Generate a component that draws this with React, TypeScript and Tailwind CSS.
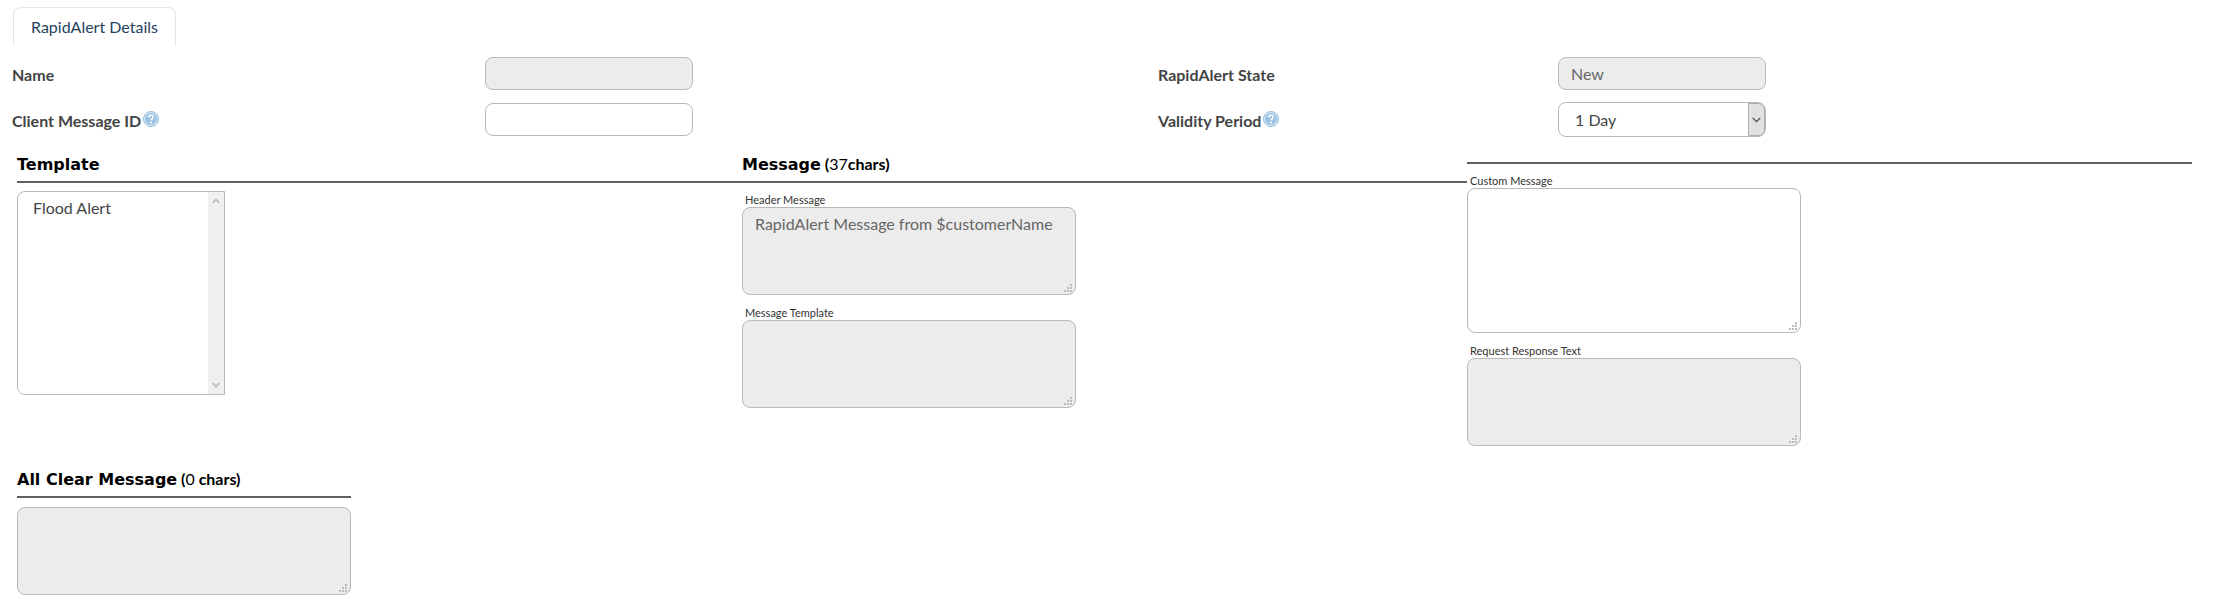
import clsx from "clsx";
import { useState, type ReactNode } from "react";

const fieldBase =
  "block rounded-lg border border-[#b8b8b8] text-base outline-none";
const readOnlyField = "bg-[#ececec] text-[#666]";
const editableField = "bg-white text-[#444]";

const templates = ["Flood Alert"];
const validityPeriods = ["1 Day", "2 Days", "3 Days", "7 Days"];

function HelpIcon() {
  return (
    <svg viewBox="0 0 16 16" className="mb-1 ml-0.5 h-4 w-4 shrink-0" aria-hidden>
      <circle cx="8" cy="8" r="7.5" fill="#dcebf5" stroke="#94bbd9" />
      <circle cx="8" cy="8" r="6" fill="#9dc3e2" />
      <path
        d="M5.9 6.4c0-1.3.9-2.1 2.1-2.1s2.1.7 2.1 1.8c0 1.5-1.9 1.5-1.9 3.1"
        fill="none"
        stroke="#fff"
        strokeWidth="1.5"
      />
      <circle cx="8.1" cy="11.4" r="1" fill="#fff" />
    </svg>
  );
}

function FieldLabel({
  htmlFor,
  help,
  children,
}: {
  htmlFor: string;
  help?: boolean;
  children: ReactNode;
}) {
  return (
    <div className="flex items-center pt-0.5">
      <label htmlFor={htmlFor} className="font-bold text-[#444]">
        {children}
      </label>
      {help ? <HelpIcon /> : null}
    </div>
  );
}

function SectionHeading({ id, children }: { id?: string; children?: ReactNode }) {
  return (
    <h2
      id={id}
      className="border-b-2 border-[#5f5f5f] pb-2 text-base leading-[19px] font-bold text-black"
    >
      {children}
    </h2>
  );
}

// leading-none keeps the second font from stretching the heading's line box
function HeadingName({ children }: { children: ReactNode }) {
  return <span className="font-['DejaVu_Sans'] leading-none">{children}</span>;
}

function ResizeGrip() {
  return (
    <svg
      viewBox="0 0 8 8"
      className="pointer-events-none absolute right-1 bottom-[3px] h-2 w-2"
      fill="#bcbcbc"
      shapeRendering="crispEdges"
      aria-hidden
    >
      <path d="M6 0h2v2H6zM3 3h2v2H3zM6 3h2v2H6zM0 6h2v2H0zM3 6h2v2H3zM6 6h2v2H6z" />
    </svg>
  );
}

function MessageBox({
  id,
  label,
  labelledBy,
  value,
  onChange,
  tall,
}: {
  id: string;
  label?: string;
  labelledBy?: string;
  value: string;
  onChange?: (value: string) => void;
  tall?: boolean;
}) {
  return (
    <div className="w-[334px]">
      {label ? (
        <label
          htmlFor={id}
          className="block pl-[3px] text-[11px] leading-[14px] text-[#333]"
        >
          {label}
        </label>
      ) : null}
      <div className="relative">
        <textarea
          id={id}
          aria-labelledby={labelledBy}
          value={value}
          disabled={!onChange}
          onChange={(e) => onChange?.(e.target.value)}
          className={clsx(
            fieldBase,
            "w-full resize-none px-3 py-1",
            tall ? "h-[145px]" : "h-[88px]",
            onChange ? editableField : readOnlyField,
          )}
        />
        <ResizeGrip />
      </div>
    </div>
  );
}

export default function App() {
  const [clientMessageId, setClientMessageId] = useState("");
  const [validity, setValidity] = useState(validityPeriods[0]);
  const [customMessage, setCustomMessage] = useState("");

  const headerMessage = "RapidAlert Message from $customerName";
  const allClearMessage = "";

  return (
    <main className="bg-white pb-[10px] font-['Lato',sans-serif] text-base text-[#444]">
      <div className="flex px-[13px] pt-[7px]" role="tablist">
        <button
          type="button"
          role="tab"
          aria-selected
          className="h-[39px] rounded-t-lg border border-b-0 border-[#e6e6e6] px-[17px] text-[#27425f]"
        >
          RapidAlert Details
        </button>
      </div>

      <div className="grid grid-cols-[473fr_673fr_400fr_664fr] items-center gap-y-3 px-3 pt-[11px]">
        <FieldLabel htmlFor="name">Name</FieldLabel>
        <input
          id="name"
          disabled
          className={clsx(fieldBase, readOnlyField, "h-[33px] w-52 px-3")}
        />
        <FieldLabel htmlFor="state">RapidAlert State</FieldLabel>
        <input
          id="state"
          value="New"
          disabled
          className={clsx(fieldBase, readOnlyField, "h-[33px] w-52 px-3")}
        />

        <FieldLabel htmlFor="client-message-id" help>
          Client Message ID
        </FieldLabel>
        <input
          id="client-message-id"
          value={clientMessageId}
          onChange={(e) => setClientMessageId(e.target.value)}
          className={clsx(fieldBase, editableField, "h-[33px] w-52 px-3")}
        />
        <FieldLabel htmlFor="validity" help>
          Validity Period
        </FieldLabel>
        <div className="relative w-52">
          <select
            id="validity"
            value={validity}
            onChange={(e) => setValidity(e.target.value)}
            className={clsx(
              fieldBase,
              editableField,
              "h-[35px] w-full appearance-none px-4",
            )}
          >
            {validityPeriods.map((period) => (
              <option key={period}>{period}</option>
            ))}
          </select>
          <span className="pointer-events-none absolute inset-y-px right-px flex w-[17px] items-center justify-center rounded-r-[7px] border border-[#adadad] bg-[#e1e1e1]">
            <svg viewBox="0 0 9 6" className="h-[6px] w-[9px]" aria-hidden>
              <path d="M.7.8 4.5 4.6 8.3.8" fill="none" stroke="#444" strokeWidth="1.2" />
            </svg>
          </span>
        </div>
      </div>

      <div className="grid grid-cols-3 pt-[17px] pr-[42px] pl-[17px]">
        <section>
          <SectionHeading id="template-heading">
            <HeadingName>Template</HeadingName>
          </SectionHeading>
          <div className="pt-2">
            <div className="relative w-52">
              <select
                size={8}
                aria-labelledby="template-heading"
                className="block h-[204px] w-full appearance-none overflow-hidden rounded-l-lg border border-[#b8b8b8] bg-white py-[6px] pr-5 pl-[15px] text-base text-[#444] outline-none"
              >
                {templates.map((template) => (
                  <option key={template} className="p-0">
                    {template}
                  </option>
                ))}
              </select>
              <span className="pointer-events-none absolute inset-y-px right-px flex w-4 flex-col items-center justify-between bg-[#f0f0f0] py-[6px]">
                <svg viewBox="0 0 8 6" className="h-[6px] w-2" aria-hidden>
                  <path d="M.7 4.9 4 1.6l3.3 3.3" fill="none" stroke="#bfbfbf" strokeWidth="2" />
                </svg>
                <svg viewBox="0 0 8 6" className="h-[6px] w-2" aria-hidden>
                  <path d="M.7 1.1 4 4.4l3.3-3.3" fill="none" stroke="#bfbfbf" strokeWidth="2" />
                </svg>
              </span>
            </div>
          </div>
        </section>

        <section>
          <SectionHeading>
            <HeadingName>Message</HeadingName> (
            <span className="font-normal">{headerMessage.length}</span>chars)
          </SectionHeading>
          <div className="flex flex-col gap-[11px] pt-[10px]">
            <MessageBox id="header-message" label="Header Message" value={headerMessage} />
            <MessageBox id="message-template" label="Message Template" value="" />
          </div>
        </section>

        <section>
          <SectionHeading />
          <div className="flex flex-col gap-[11px] pt-[10px]">
            <MessageBox
              id="custom-message"
              label="Custom Message"
              value={customMessage}
              onChange={setCustomMessage}
              tall
            />
            <MessageBox id="response-text" label="Request Response Text" value="" />
          </div>
        </section>
      </div>

      <section className="ml-[17px] w-[334px] pt-[23px]">
        <SectionHeading id="all-clear-heading">
          <HeadingName>All Clear Message</HeadingName> (
          <span className="font-normal">{allClearMessage.length}</span> chars)
        </SectionHeading>
        <div className="pt-[9px]">
          <MessageBox
            id="all-clear"
            labelledBy="all-clear-heading"
            value={allClearMessage}
          />
        </div>
      </section>
    </main>
  );
}
